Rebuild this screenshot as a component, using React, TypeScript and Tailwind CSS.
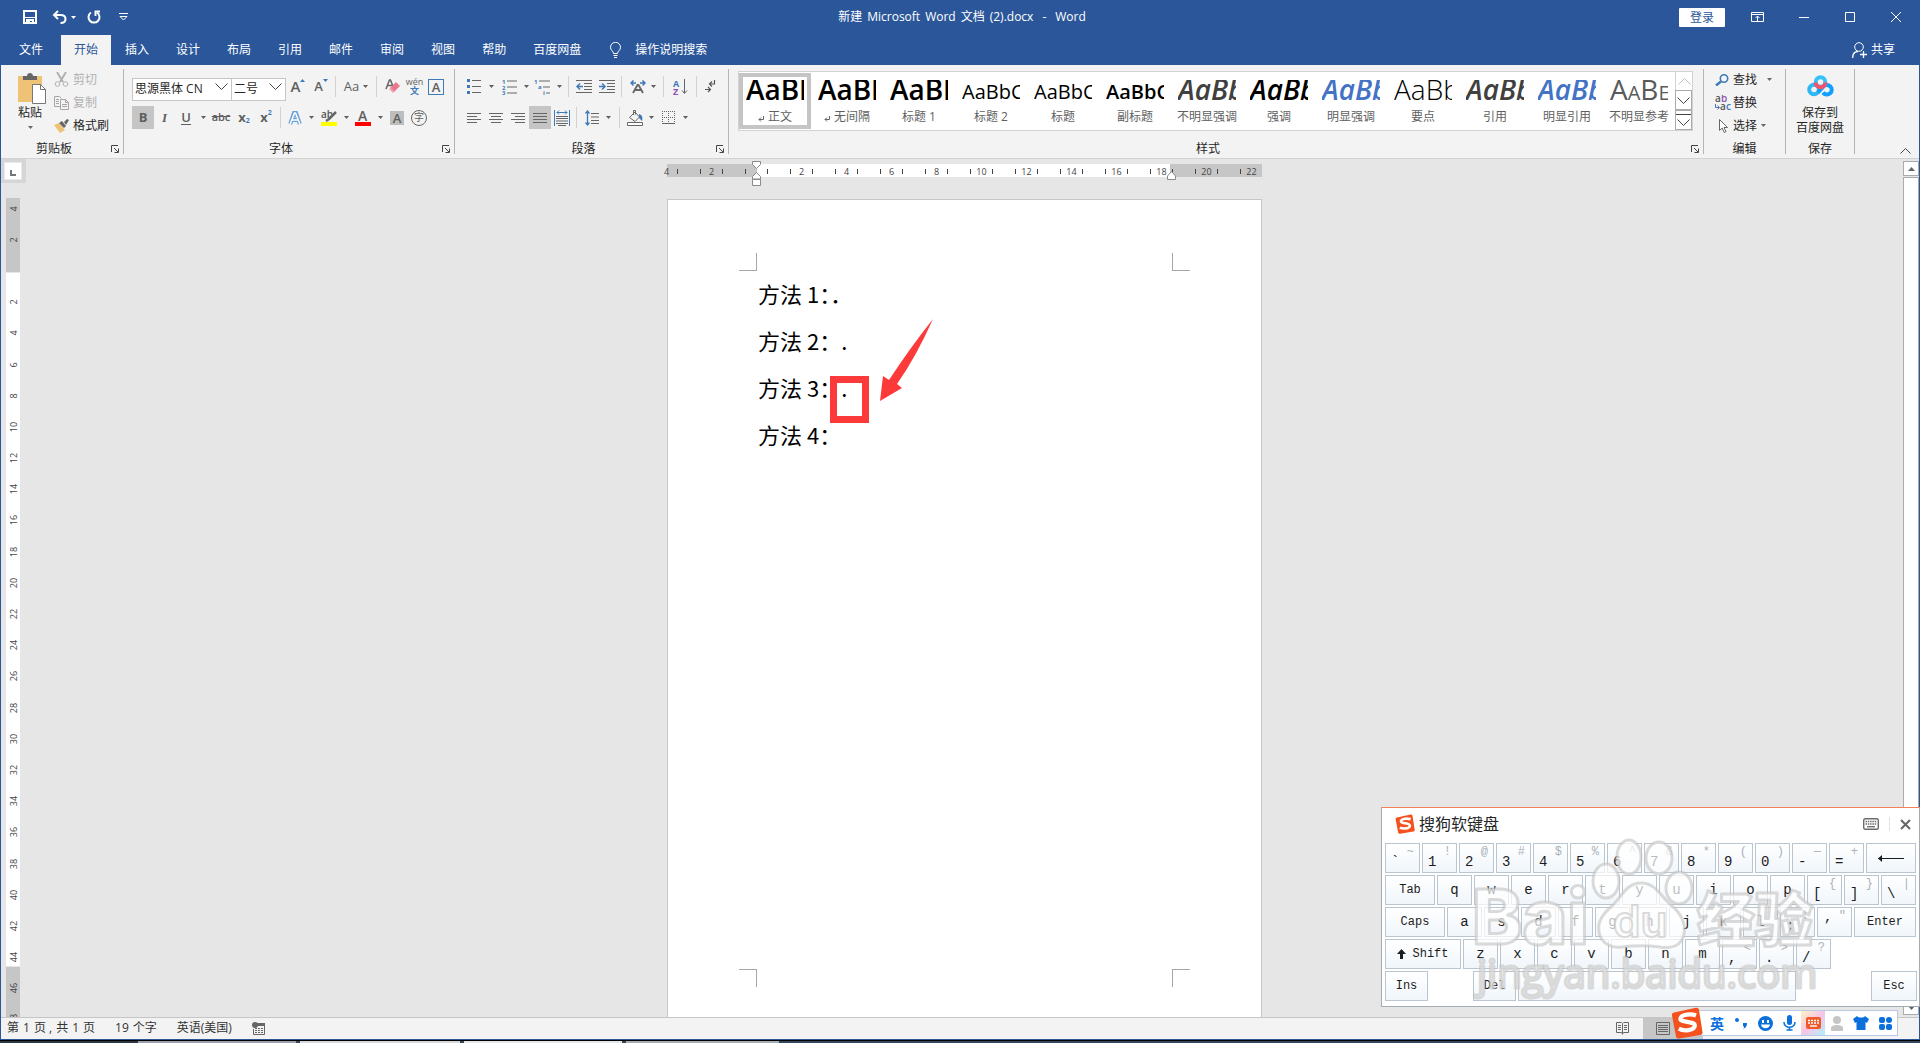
import type { ReactNode } from 'react';
import clsx from 'clsx';

const TABS = ['开始', '插入', '设计', '布局', '引用', '邮件', '审阅', '视图', '帮助', '百度网盘'];

const STYLES = [
  { label: '正文', mark: true, sample: 'AaBb', look: 'text-[28px] leading-[28px] font-semibold text-black' },
  { label: '无间隔', mark: true, sample: 'AaBb', look: 'text-[28px] leading-[28px] font-semibold text-black' },
  { label: '标题 1', sample: 'AaBb', look: 'text-[28px] leading-[28px] font-semibold text-black' },
  { label: '标题 2', sample: 'AaBbC', look: 'text-[20px] leading-[22px] text-black' },
  { label: '标题', sample: 'AaBbC', look: 'text-[20px] leading-[22px] text-black' },
  { label: '副标题', sample: 'AaBbC', look: 'text-[20px] leading-[22px] font-semibold text-black' },
  { label: '不明显强调', sample: 'AaBb', look: 'text-[28px] leading-[28px] font-semibold italic text-[#404040]' },
  { label: '强调', sample: 'AaBb', look: 'text-[28px] leading-[28px] font-semibold italic text-black' },
  { label: '明显强调', sample: 'AaBb', look: 'text-[28px] leading-[28px] font-semibold italic text-[#4472c4]' },
  { label: '要点', sample: 'AaBb', look: 'text-[28px] leading-[28px] font-light text-black' },
  { label: '引用', sample: 'AaBb', look: 'text-[28px] leading-[28px] font-semibold italic text-[#404040]' },
  { label: '明显引用', sample: 'AaBb', look: 'text-[28px] leading-[28px] font-semibold italic text-[#4472c4]' },
  { label: '不明显参考', sample: 'AaBe', look: 'text-[28px] leading-[28px] text-[#5a5a5a] [font-variant-caps:small-caps]' },
];

const H_RULER = ['4', '2', '', '2', '4', '6', '8', '10', '12', '14', '16', '18', '20', '22'];
const V_RULER = ['4', '2', '', ...Array.from({ length: 24 }, (_, i) => String(i * 2 + 2))];

type KeyDef = { k: string; s?: string };
const ROW_1: KeyDef[] = [
  { k: '`', s: '~' }, { k: '1', s: '!' }, { k: '2', s: '@' }, { k: '3', s: '#' }, { k: '4', s: '$' },
  { k: '5', s: '%' }, { k: '6', s: '^' }, { k: '7', s: '&' }, { k: '8', s: '*' }, { k: '9', s: '(' },
  { k: '0', s: ')' }, { k: '-', s: '—' }, { k: '=', s: '+' },
];
const ROW_2: KeyDef[] = [
  ...'qwertyuiop'.split('').map((k) => ({ k })),
  { k: '[', s: '{' }, { k: ']', s: '}' }, { k: '\\', s: '|' },
];
const ROW_3: KeyDef[] = [...'asdfghjkl'.split('').map((k) => ({ k })), { k: ';', s: ':' }, { k: '’', s: '"' }];
const ROW_4: KeyDef[] = [
  ...'zxcvbnm'.split('').map((k) => ({ k })),
  { k: ',', s: '<' }, { k: '.', s: '>' }, { k: '/', s: '?' },
];

/* ---------- small shared pieces ---------- */

function Svg({ w, h, children, className }: { w: number; h: number; children: ReactNode; className?: string }) {
  return (
    <svg width={w} height={h} viewBox={`0 0 ${w} ${h}`} fill="none" stroke="#666" className={clsx('shrink-0', className)} aria-hidden="true">
      {children}
    </svg>
  );
}

function Caret({ className }: { className?: string }) {
  return (
    <svg width="5" height="3" viewBox="0 0 5 3" fill="currentColor" className={clsx('shrink-0', className)} aria-hidden="true">
      <path d="M0 0h5L2.5 3z" />
    </svg>
  );
}

function Tool({ label, className, active, children }: { label: string; className: string; active?: boolean; children: ReactNode }) {
  return (
    <button
      type="button"
      aria-label={label}
      className={clsx('flex h-[23px] shrink-0 items-center justify-center text-[#5f5f5f]', active && 'bg-[#c5c5c5]', className)}
    >
      {children}
    </button>
  );
}

function Drop({ label, className }: { label: string; className: string }) {
  return (
    <Tool label={label} className={className}>
      <Caret />
    </Tool>
  );
}

function Sep() {
  return <div className="mx-[3px] h-[21px] w-px shrink-0 bg-[#d2d2d2]" />;
}

function Group({ title, launcher, className, children }: { title: string; launcher?: boolean; className: string; children: ReactNode }) {
  return (
    <>
      <section className={clsx('flex flex-col', className)}>
        <div className="h-[76px]">{children}</div>
        <div className="flex h-4 items-center">
          <h2 className="flex-1 text-center text-xs text-[#262626]">{title}</h2>
          {launcher && (
            <button type="button" aria-label={`${title}设置`} className="flex w-4 justify-center">
              <Svg w={8} h={8} className="stroke-[#444]">
                <path d="M.5 7V.5H7M3 3l4 4M7.500 3.500v4h-4" />
              </Svg>
            </button>
          )}
        </div>
      </section>
      <div className="mt-1 h-[85px] w-px shrink-0 bg-[#b5b5b5]" />
    </>
  );
}

function Lines({ rows }: { rows: [number, number][] }) {
  return (
    <Svg w={14} h={12}>
      {rows.map(([x, len], i) => (
        <path key={i} d={`M${x} ${i * 3 + 1.5}h${len}`} />
      ))}
    </Svg>
  );
}

function SogouMark({ size }: { size: number }) {
  return (
    <svg width={size} height={size} viewBox="0 0 32 32" className="shrink-0" aria-hidden="true">
      <path d="M3 5.500 25 .8a2.500 2.500 0 0 1 3 2L31.500 25a2.500 2.500 0 0 1-2 3L8 31.500a2.500 2.500 0 0 1-3-2L1 8.500a2.500 2.500 0 0 1 2-3z" fill="#f4511e" />
      <path d="M25 8.500c-4.500-2-14.500-1.500-15.500 2.900-1 4.600 14.500 2.300 14.300 7.300-.2 4.800-11 5.800-16 3" fill="none" stroke="#fff" strokeWidth="4.200" />
    </svg>
  );
}

/* ---------- title bar and tabs ---------- */

function TitleBar() {
  return (
    <header className="flex h-[35px] items-center pb-px text-white">
      <div className="flex h-full flex-1 items-center pl-[23px]">
        <button type="button" aria-label="保存">
          <Svg w={14} h={14} className="stroke-white">
            <path d="M1 1h12v12H1z" strokeWidth="2" />
            <path d="M2 7.500h10" />
            <path d="M3 9h8v5H9v-3H7v3H3z" fill="#fff" stroke="none" />
          </Svg>
        </button>
        <button type="button" aria-label="撤消" className="ml-[15px]">
          <Svg w={15} h={14} className="stroke-white">
            <path d="M6 1 2 5l4 4M2 5h6.500c3 0 5 1.500 5 4s-2 4-5 4" strokeWidth="2" />
          </Svg>
        </button>
        <Caret className="ml-1" />
        <button type="button" aria-label="重复" className="ml-[11px]">
          <Svg w={14} h={14} className="stroke-white">
            <path d="M4 2.500A5.500 5.500 0 1 0 10 2.500" strokeWidth="2" />
            <path d="M13 1.500H8.500V6" strokeWidth="2" />
          </Svg>
        </button>
        <button type="button" aria-label="自定义快速访问工具栏" className="ml-[18px]">
          <Svg w={9} h={8} className="stroke-white">
            <path d="M0 .5h9M1 3.500h7L4.500 7z" />
          </Svg>
        </button>
      </div>
      <h1 className="flex gap-[5px] text-xs">
        <span>新建</span>
        <span>Microsoft</span>
        <span>Word</span>
        <span>文档</span>
        <span>(2).docx</span>
        <span className="px-1">-</span>
        <span>Word</span>
      </h1>
      <div className="flex h-full flex-1 items-center justify-end pr-[19px]">
        <button type="button" className="h-[19px] w-[46px] rounded-[1px] bg-white text-xs leading-[19px] text-[#2b579a]">
          登录
        </button>
        <button type="button" aria-label="功能区显示选项" className="ml-[26px]">
          <Svg w={13} h={10} className="stroke-white">
            <path d="M.5.5h12v9H.5zM.5 2.500h12M6.500 9V4.500M4.500 6l2-2 2 2" />
          </Svg>
        </button>
        <button type="button" aria-label="最小化" className="ml-[35px]">
          <Svg w={10} h={10} className="stroke-white">
            <path d="M0 5.500h10" />
          </Svg>
        </button>
        <button type="button" aria-label="最大化" className="ml-9">
          <Svg w={10} h={10} className="stroke-white">
            <path d="M.5.5h9v9h-9z" />
          </Svg>
        </button>
        <button type="button" aria-label="关闭" className="ml-9">
          <Svg w={10} h={10} className="stroke-white">
            <path d="M0 0l10 10M10 0 0 10" />
          </Svg>
        </button>
      </div>
    </header>
  );
}

function TabBar() {
  return (
    <nav className="flex h-[30px] items-stretch text-xs text-white">
      <button type="button" className="ml-px w-[60px]">文件</button>
      <div className="flex gap-px">
        {TABS.map((tab, i) => (
          <button key={tab} type="button" className={clsx('px-[13px]', i === 0 && 'bg-[#f3f3f3] text-[#2b579a]')}>
            {tab}
          </button>
        ))}
      </div>
      <button type="button" className="ml-4 flex items-center gap-[14px]">
        <Svg w={11} h={16} className="stroke-white">
          <path d="M3.500 11.500C3.500 9 .5 8.500.5 5.300a5 5 0 0 1 10 0c0 3.200-3 3.700-3 6.200zM3.500 13.500h4M4 15.500h3" />
        </Svg>
        操作说明搜索
      </button>
      <button type="button" className="ml-auto mr-[25px] flex items-center gap-1">
        <Svg w={15} h={16} className="stroke-white">
          <circle cx="7" cy="5" r="4.300" />
          <path d="M.7 16c0-4 2-6.500 5.300-6.500M8 12.500h7M11.500 9v7" strokeWidth="1.300" />
        </Svg>
        共享
      </button>
    </nav>
  );
}

/* ---------- ribbon ---------- */

function ClipboardGroup() {
  return (
    <Group title="剪贴板" launcher className="w-[122px]">
      <div className="flex pl-4">
        <button type="button" className="flex w-[30px] flex-col items-center pt-[7px] text-xs text-[#262626]">
          <Svg w={30} h={32} className="self-start stroke-none">
            <path d="M1 4h24v26H1z" fill="#eec376" />
            <path d="M6 8V4h4c0-4 6-4 6 0h4v4z" fill="#666" />
            <path d="M15.500 12.500h8l5 5v14h-13z" fill="#fff" stroke="#777" />
            <path d="M23.500 12.500v5h5" stroke="#777" />
          </Svg>
          <span className="mr-1 leading-[18px]">粘贴</span>
          <Caret className="mr-1 mt-1 text-[#666]" />
        </button>
        <div className="ml-[7px] flex flex-col pt-[3px] text-xs">
          <button type="button" disabled className="flex h-[23px] items-center gap-1 text-[#b1b1b1]">
            <Svg w={15} h={15} className="stroke-[#b1b1b1]">
              <path d="M3 0l6 10M12 0 6 10" strokeWidth="2" />
              <circle cx="3.500" cy="12" r="2.300" />
              <circle cx="11.500" cy="12" r="2.300" />
            </Svg>
            剪切
          </button>
          <button type="button" disabled className="flex h-[23px] items-center gap-1 text-[#b1b1b1]">
            <Svg w={15} h={14} className="stroke-[#a9a4a9]">
              <path d="M6 10.500H.5V.5h5l2 2M2 3.500h3M2 5.500h3M2 7.500h3" />
              <path d="M6.500 3.500h5l3 3v7h-8zM11.500 3.500v3h3M8 8.500h5M8 10.500h5" fill="#f3f3f3" />
            </Svg>
            复制
          </button>
          <button type="button" className="flex h-[23px] items-center gap-1 text-[#262626]">
            <Svg w={15} h={14} className="stroke-none">
              <path d="M0 6l5-2 6 7-5 3z" fill="#eec376" />
              <path d="M5 4l3-2 4 5-2 2zM10 3l3-3 2 1-3 5z" fill="#666" />
            </Svg>
            格式刷
          </button>
        </div>
      </div>
    </Group>
  );
}

function Combo({ label, value, className }: { label: string; value: string; className: string }) {
  return (
    <div className={clsx('relative h-[23px]', className)}>
      <select
        aria-label={label}
        defaultValue={value}
        className="h-full w-full appearance-none border border-[#c6c6c6] bg-white pb-px pl-[2px] text-xs text-[#262626]"
      >
        <option>{value}</option>
      </select>
      <Svg w={13} h={8} className="pointer-events-none absolute right-1 top-2 stroke-[#444]">
        <path d="M.5.5l6 6 6-6" />
      </Svg>
    </div>
  );
}

function FontGroup() {
  return (
    <Group title="字体" launcher className="w-[330px]">
      <div className="flex items-center pl-2 pt-[10px]">
        <Combo label="字体" value="思源黑体 CN" className="w-[100px]" />
        <Combo label="字号" value="二号" className="-ml-px w-[55px]" />
        <Tool label="增大字号" className="w-6">
          <span className="text-[15px] font-semibold">A</span>
          <Svg w={5} h={3} className="mb-3 stroke-none"><path d="M0 3h5L2.500 0z" fill="#3f7ab8" /></Svg>
        </Tool>
        <Tool label="减小字号" className="w-[22px]">
          <span className="text-[13px] font-semibold">A</span>
          <Svg w={5} h={3} className="mb-3 stroke-none"><path d="M0 0h5L2.500 3z" fill="#3f7ab8" /></Svg>
        </Tool>
        <Sep />
        <Tool label="更改大小写" className="w-[34px] gap-1">
          <span className="text-[13px]">Aa</span>
          <Caret />
        </Tool>
        <Sep />
        <Tool label="清除所有格式" className="w-6">
          <Svg w={15} h={15}>
            <path d="M1 10 4.500 1h1L9 10M2.500 6.500h5" strokeWidth="1.500" />
            <path d="M5 9l6-6 4 4-6 6z" fill="#e8798c" stroke="none" />
            <path d="M4 10l4 4 1.500-1.500-4-4z" fill="#f0a5b2" stroke="none" />
          </Svg>
        </Tool>
        <Tool label="拼音指南" className="w-[21px] flex-col">
          <span className="text-[9px] leading-[8px]">wén</span>
          <span className="text-[9px] font-bold leading-[9px] text-[#3f7ab8]">文</span>
        </Tool>
        <Tool label="字符边框" className="w-[22px]">
          <span className="flex h-4 w-4 items-center justify-center border border-[#3f7ab8] text-[13px] font-semibold leading-[14px]">A</span>
        </Tool>
      </div>
      <div className="flex items-center pl-2 pt-2">
        <Tool label="加粗" active className="w-[22px] text-[13px] font-bold">B</Tool>
        <Tool label="倾斜" className="w-[21px] font-['Liberation_Serif',serif] text-[13px] font-bold italic">I</Tool>
        <Tool label="下划线" className="w-[22px]">
          <span className="border-b border-[#5f5f5f] text-[13px] font-semibold leading-[13px]">U</span>
        </Tool>
        <Drop label="下划线选项" className="w-3" />
        <Tool label="删除线" className="w-6 text-[11px] font-semibold line-through">abc</Tool>
        <Tool label="下标" className="w-[22px] text-[13px] font-bold">
          x<span className="mt-2 text-[7px] text-[#3f7ab8]">2</span>
        </Tool>
        <Tool label="上标" className="w-[22px] text-[13px] font-bold">
          x<span className="mb-2 text-[7px] text-[#3f7ab8]">2</span>
        </Tool>
        <Sep />
        <Tool label="文本效果" className="w-[22px]">
          <svg width="16" height="16" viewBox="0 0 16 16" aria-hidden="true">
            <path d="M3.200 14 7 3h2l3.800 11M4.800 10h6.400" fill="none" stroke="#6ba1d6" strokeWidth="4" />
            <path d="M3.200 14 7.500 3h1L12.800 14M4.800 10h6.400" fill="none" stroke="#fff" strokeWidth="1.500" />
          </svg>
        </Tool>
        <Drop label="文本效果选项" className="w-[10px]" />
        <Tool label="突出显示" className="w-[26px]">
          <Svg w={16} h={16}>
            <text x="0" y="8" fontSize="10" fontWeight="600" fill="#555" stroke="none">ab</text>
            <path d="M15 2 8 9l-3 2" strokeWidth="2.500" />
            <path d="M0 12h16v4H0z" fill="#ff0" stroke="none" />
          </Svg>
        </Tool>
        <Drop label="突出显示颜色" className="w-2" />
        <Tool label="字体颜色" className="w-[26px]">
          <Svg w={16} h={16}>
            <text x="3" y="11" fontSize="14" fontWeight="600" fill="#5f5f5f" stroke="none">A</text>
            <path d="M0 12h16v4H0z" fill="#f00" stroke="none" />
          </Svg>
        </Tool>
        <Drop label="字体颜色选项" className="w-2" />
        <Tool label="字符底纹" className="w-[26px]">
          <span className="h-[14px] w-[14px] bg-[#bdbdbd] text-[13px] font-semibold leading-[14px]">A</span>
        </Tool>
        <Tool label="带圈字符" className="w-[18px]">
          <span className="h-4 w-4 shrink-0 rounded-full border border-[#666] text-[10px] leading-[13px]">字</span>
        </Tool>
      </div>
    </Group>
  );
}

function ParagraphGroup() {
  return (
    <Group title="段落" launcher className="w-[273px]">
      <div className="flex items-center pl-2 pt-[10px]">
        <Tool label="项目符号" className="w-[22px]">
          <Svg w={14} h={15}>
            <path d="M5 1.500h9M5 7.500h9M5 13.500h9" />
            <path d="M0 0h3v3H0zM0 6h3v3H0zM0 12h3v3H0z" fill="#3f7ab8" stroke="none" />
          </Svg>
        </Tool>
        <Drop label="项目符号库" className="w-3" />
        <Tool label="编号" className="w-6">
          <Svg w={15} h={16}>
            <path d="M5 2h10M5 8h10M5 14h10" />
            <g fontSize="6" fontWeight="700" fill="#3f7ab8" stroke="none">
              <text x="0" y="5">1</text>
              <text x="0" y="11">2</text>
              <text x="0" y="16">3</text>
            </g>
          </Svg>
        </Tool>
        <Drop label="编号库" className="w-[10px]" />
        <Tool label="多级列表" className="w-[22px]">
          <Svg w={16} h={16}>
            <path d="M5 2h11M9 8h7M12 14h4" />
            <g fontSize="6" fontWeight="700" fill="#3f7ab8" stroke="none">
              <text x="0" y="5">1</text>
              <text x="4" y="10">a</text>
              <text x="9" y="16">i</text>
            </g>
          </Svg>
        </Tool>
        <Drop label="多级列表库" className="w-3" />
        <Sep />
        <Tool label="减少缩进量" className="w-6">
          <Svg w={16} h={13}>
            <path d="M0 .5h16M8 3.500h8M8 6.500h8M8 9.500h8M0 12.500h16" />
            <path d="M7 6.500H1M4 3.500l-3 3 3 3" stroke="#3f7ab8" strokeWidth="1.500" />
          </Svg>
        </Tool>
        <Tool label="增加缩进量" className="w-[22px]">
          <Svg w={16} h={13}>
            <path d="M0 .5h16M8 3.500h8M8 6.500h8M8 9.500h8M0 12.500h16" />
            <path d="M0 6.500h6M3 3.500l3 3-3 3" stroke="#3f7ab8" strokeWidth="1.500" />
          </Svg>
        </Tool>
        <Sep />
        <Tool label="中文版式" className="w-[25px]">
          <Svg w={16} h={14}>
            <path d="M3 13 7.500 5h1L13 13M4.500 10h7" strokeWidth="1.800" />
            <path d="M6 3H1M3.500.5 1 3l2.500 2.500M10 3h5M12.500.5 15 3l-2.500 2.500" stroke="#3f7ab8" strokeWidth="1.500" />
          </Svg>
        </Tool>
        <Drop label="中文版式选项" className="mr-1 w-[6px]" />
        <Sep />
        <Tool label="排序" className="w-[26px]">
          <Svg w={15} h={16}>
            <text x="0" y="8" fontSize="9" fontWeight="700" fill="#3f7ab8" stroke="none">A</text>
            <text x="0" y="16" fontSize="9" fontWeight="700" fill="#8b52ae" stroke="none">Z</text>
            <path d="M11.500 0v14M9 11.500l2.500 3 2.500-3" />
          </Svg>
        </Tool>
        <Sep />
        <Tool label="显示编辑标记" className="w-[22px]">
          <Svg w={12} h={13} className="stroke-[#555]">
            <path d="M9.500 0v4H5M7 1.500 4.500 4 7 6.500M0 9.500h5M3 7l2.500 2.500L3 12" strokeWidth="1.200" />
          </Svg>
        </Tool>
      </div>
      <div className="flex items-center pl-2 pt-2">
        <Tool label="左对齐" className="w-[22px]"><Lines rows={[[0, 14], [0, 10], [0, 14], [0, 10]]} /></Tool>
        <Tool label="居中" className="w-[22px]"><Lines rows={[[0, 14], [2, 10], [0, 14], [2, 10]]} /></Tool>
        <Tool label="右对齐" className="w-[22px]"><Lines rows={[[0, 14], [4, 10], [0, 14], [4, 10]]} /></Tool>
        <Tool label="两端对齐" active className="w-[22px]"><Lines rows={[[0, 14], [0, 14], [0, 14], [0, 14]]} /></Tool>
        <Tool label="分散对齐" className="w-[22px]">
          <Svg w={16} h={16}>
            <path d="M.5 0v16M15.500 0v16M3 2.500h10M5 .5l-2 2 2 2M11 .5l2 2-2 2" stroke="#3f7ab8" />
            <path d="M2 6.500h12M2 8.500h12M2 11h12M2 13.500h12M4 15.500h8" />
          </Svg>
        </Tool>
        <Sep />
        <Tool label="行和段落间距" className="w-6">
          <Svg w={14} h={16}>
            <path d="M6 3.500h8M6 7h8M6 10.500h8M6 13.500h8" />
            <path d="M2.500 1v14M.5 3.500l2-2.500 2 2.500M.5 12.500l2 2.500 2-2.500" stroke="#3f7ab8" strokeWidth="1.300" />
          </Svg>
        </Tool>
        <Drop label="间距选项" className="mr-1 w-2" />
        <Sep />
        <Tool label="底纹" className="w-6">
          <Svg w={16} h={16}>
            <path d="M2.500 7.500 8 2l4.500 5L8 11.500zM6.500 5V.5h2v4" />
            <path d="M12 4c3 1 4 3 3 7l-3-3z" fill="#3f7ab8" stroke="none" />
            <path d="M.5 12.500h15v3H.5z" fill="#fff" />
          </Svg>
        </Tool>
        <Drop label="底纹颜色" className="w-2" />
        <Tool label="边框" className="w-[26px]">
          <Svg w={13} h={13}>
            <path d="M.5 0v12M12.500 0v12M6.500 0v12M0 .5h13M0 6.500h13" strokeDasharray="1 1" />
            <path d="M0 12.500h13" />
          </Svg>
        </Tool>
        <Drop label="边框选项" className="w-2" />
      </div>
    </Group>
  );
}

function StylesGroup() {
  return (
    <Group title="样式" launcher className="min-w-0 flex-1">
      <div className="pl-[9px] pr-[10px] pt-[6px]">
        <div className="flex h-[60px] border border-[#d2d2d2] bg-white">
          <div className="flex min-w-0 flex-1 overflow-hidden">
            {STYLES.map((style, i) => (
              <button
                key={style.label}
                type="button"
                className={clsx(
                  'my-px flex w-[72px] shrink-0 flex-col items-center border-4',
                  i === 0 ? 'border-[#c5c5c5]' : 'border-transparent',
                )}
              >
                <span className="mt-[3px] flex h-[23px] w-[58px] items-end overflow-hidden">
                  <span className={clsx("font-['Open_Sans','Noto_Sans',sans-serif]", style.look)}>{style.sample}</span>
                </span>
                <span className="mt-[5px] flex items-center gap-1 whitespace-nowrap text-xs leading-[17px] text-[#5f5f5f]">
                  {style.mark && (
                    <Svg w={6} h={6} className="mt-1">
                      <path d="M5.500 0v3.500H1M3 1.500l-2 2 2 2" />
                    </Svg>
                  )}
                  {style.label}
                </span>
              </button>
            ))}
          </div>
          <div className="flex w-[17px] flex-col">
            <button type="button" aria-label="上一行" className="flex flex-1 items-center justify-center border-l border-[#d2d2d2]">
              <Svg w={13} h={7} className="stroke-[#c0c0c0]"><path d="M.5 6.500l6-6 6 6" /></Svg>
            </button>
            <button type="button" aria-label="下一行" className="flex flex-1 items-center justify-center border border-[#ababab]">
              <Svg w={13} h={7} className="stroke-[#444]"><path d="M.5.5l6 6 6-6" /></Svg>
            </button>
            <button type="button" aria-label="其他样式" className="flex flex-1 items-center justify-center border border-[#ababab]">
              <Svg w={15} h={12} className="stroke-[#444]"><path d="M0 .5h15M1.500 5.500l6 6 6-6" /></Svg>
            </button>
          </div>
        </div>
      </div>
    </Group>
  );
}

function EditGroup() {
  return (
    <Group title="编辑" className="w-[81px]">
      <div className="flex flex-col pl-[11px] pt-[3px] text-xs text-[#262626]">
        <button type="button" className="flex h-[23px] items-center">
          <Svg w={14} h={12} className="mr-1">
            <circle cx="9" cy="4.500" r="3.700" stroke="#3f7ab8" strokeWidth="1.600" />
            <path d="M6 7.500 1 11.500" stroke="#3f7ab8" strokeWidth="2.400" />
          </Svg>
          查找
          <Caret className="ml-[10px] text-[#666]" />
        </button>
        <button type="button" className="flex h-[23px] items-center gap-[2px]">
          <Svg w={16} h={15} className="stroke-none">
            <text x="0" y="7" fontSize="10" fontWeight="600" fill="#555">a</text>
            <text x="6" y="7" fontSize="10" fontWeight="600" fill="#8b52ae">b</text>
            <text x="5" y="15" fontSize="10" fontWeight="600" fill="#555">a</text>
            <text x="11" y="15" fontSize="10" fontWeight="600" fill="#3f7ab8">c</text>
            <path d="M.5 9v3.500H4M2.500 10.500l2 2-2 2" stroke="#3f7ab8" fill="none" />
          </Svg>
          替换
        </button>
        <button type="button" className="flex h-[23px] items-center pl-1">
          <Svg w={9} h={14} className="mr-[5px]">
            <path d="M.5.5v11l2.700-2.500 2 4.500 1.800-.8-2-4.200h3.500z" fill="#fff" />
          </Svg>
          选择
          <Caret className="ml-1 text-[#666]" />
        </button>
      </div>
    </Group>
  );
}

function CloudGroup() {
  return (
    <Group title="保存" className="w-[68px]">
      <button type="button" className="flex w-full flex-col items-center pt-[10px] text-xs leading-[15px] text-[#262626]">
        <svg width="27" height="22" viewBox="0 0 27 22" fill="none" strokeWidth="4" className="mb-2" aria-hidden="true">
          <circle cx="7" cy="14.500" r="4.800" stroke="#2fb8f5" />
          <path d="M11 17.500 16 12a4.800 4.800 0 1 1 0 5.500" stroke="#11a0ff" />
          <circle cx="13.500" cy="7" r="4.800" stroke="#35c2f8" />
          <path d="M8.700 7.500a4.800 4.800 0 0 0 9.600 0" stroke="#f4526a" />
        </svg>
        保存到
        <br />
        百度网盘
      </button>
    </Group>
  );
}

/* ---------- document area ---------- */

function HorizontalRuler() {
  return (
    <div className="relative mt-[5px] flex h-[13px] w-[595px] shrink-0 bg-[#c6c6c6]">
      <div className="ml-[90px] h-full w-[413px] bg-white" />
      <div className="absolute inset-y-0 -left-[23px] flex pt-px text-[9px] leading-[13px] text-[#444]">
        {H_RULER.map((n, i) => (
          <div key={i} className="flex w-[45px] items-center justify-between px-[11px]">
            <span className={clsx('h-[5px] w-px', i > 0 && 'bg-[#444]')} />
            <span>{n}</span>
            <span className={clsx('h-[5px] w-px', i < H_RULER.length - 1 && 'bg-[#444]')} />
          </div>
        ))}
      </div>
      <Svg w={9} h={25} className="absolute -top-[3px] left-[85px] stroke-[#8a8a8a]">
        <path d="M.5.5h8v3l-4 4-4-4zM.5 18v-2.500l4-4 4 4V18zM.5 18.500h8v6h-8z" fill="#fff" />
      </Svg>
      <Svg w={9} h={9} className="absolute left-[500px] top-[7px] stroke-[#8a8a8a]">
        <path d="M.5 8.500V5l4-4.500 4 4.500v3.500z" fill="#fff" />
      </Svg>
    </div>
  );
}

function VerticalRuler() {
  return (
    <div className="flex w-[25px] shrink-0 flex-col">
      <div className="h-6 bg-[#d6d6d6] p-[3px] pr-1">
        <div className="flex h-full items-center justify-center border border-[#e9e9e9] bg-white">
          <span className="mt-1 h-[6px] w-[6px] border-b-2 border-l-2 border-[#777]" />
        </div>
      </div>
      <div className="relative ml-[5px] mt-[15px] flex min-h-0 w-[14px] flex-1 flex-col gap-px overflow-hidden">
        <div className="h-[74px] shrink-0 bg-[#c6c6c6]" />
        <div className="h-[693px] shrink-0 bg-white" />
        <div className="flex-1 bg-[#c6c6c6]" />
        <div className="absolute inset-x-0 -top-[5px] flex h-[842px] flex-col pl-[2px] text-[9px] leading-[14px] text-[#444]">
          {V_RULER.map((n, i) => (
            <div key={i} className="flex flex-1 items-center justify-center">
              <span className="-rotate-90">{n}</span>
            </div>
          ))}
        </div>
      </div>
    </div>
  );
}

function Page() {
  return (
    <article className="mt-[22px] flex w-[595px] flex-1 flex-col border border-b-0 border-[#c6c6c6] bg-white">
      <div className="mt-[53px] flex justify-between px-[71px]">
        <span className="h-[18px] w-[18px] border-b border-r border-[#a6a6a6]" />
        <span className="h-[18px] w-[18px] border-b border-l border-[#a6a6a6]" />
      </div>
      <div className="relative -mt-px px-[90px] font-['Noto_Sans_CJK_SC',sans-serif] text-[22px] leading-[47px] text-black">
        <p>方法 1：．</p>
        <p>方法 2：.</p>
        <p>方法 3：.</p>
        <p>方法 4：</p>
        <div className="absolute left-[162px] top-[106px] h-[47px] w-[39px] border-[7px] border-[#fc3a3a]" />
        <svg width="54" height="84" viewBox="0 0 54 84" className="absolute left-[212px] top-[49px]" aria-hidden="true">
          <path d="M53 0Q36 38 17 65l5 4L0 82 3 57l6 4Q30 29 53 0z" fill="#fc3a3a" />
        </svg>
      </div>
      <div className="mb-[30px] mt-auto flex justify-between px-[71px]">
        <span className="h-[18px] w-[18px] border-r border-t border-[#a6a6a6]" />
        <span className="h-[18px] w-[18px] border-l border-t border-[#a6a6a6]" />
      </div>
    </article>
  );
}

function ScrollBar() {
  return (
    <div className="flex w-4 shrink-0 flex-col gap-px pt-0.5 text-[#666]">
      <button type="button" aria-label="向上滚动" className="flex h-[15px] items-center justify-center border border-[#ababab] bg-white">
        <svg width="7" height="4" viewBox="0 0 7 4" fill="currentColor" aria-hidden="true"><path d="M0 4h7L3.500 0z" /></svg>
      </button>
      <div className="flex-1 border border-[#ababab] bg-white" />
      <button type="button" aria-label="向下滚动" className="mb-0.5 flex h-[15px] items-center justify-center border border-[#ababab] bg-white">
        <svg width="7" height="4" viewBox="0 0 7 4" fill="currentColor" aria-hidden="true"><path d="M0 0h7L3.500 4z" /></svg>
      </button>
    </div>
  );
}

/* ---------- on-screen keyboard ---------- */

const KEY = 'h-[30px] shrink-0 border border-[#b9c6d1] bg-gradient-to-b from-white to-[#f1f6fb] text-[#1c1c1c]';

function Keys({ keys }: { keys: KeyDef[] }) {
  return (
    <>
      {keys.map(({ k, s }) => (
        <button key={k} type="button" className={clsx(KEY, 'w-[35px] text-[14px] leading-[14px]', s ? 'flex justify-between px-[5px]' : '')}>
          <span className={s ? 'self-end pb-[3px]' : ''}>{k}</span>
          {s && <span className="self-start pt-px text-[12px] text-[#a9b2ba]">{s}</span>}
        </button>
      ))}
    </>
  );
}

function WideKey({ children, className }: { children?: ReactNode; className: string }) {
  return (
    <button type="button" className={clsx(KEY, 'flex items-center justify-center gap-[6px] text-xs', className)}>
      {children}
    </button>
  );
}

function Watermark() {
  return (
    <svg
      width="360"
      height="170"
      viewBox="0 0 360 170"
      className="pointer-events-none absolute bottom-[6px] right-[94px]"
      fill="#fff"
      fillOpacity="0.7"
      stroke="#c2c2c2"
      strokeOpacity="0.6"
      strokeWidth="3"
      strokeLinejoin="round"
      aria-hidden="true"
    >
      <ellipse cx="141" cy="51" rx="13" ry="17" />
      <ellipse cx="164" cy="27" rx="12" ry="17" />
      <ellipse cx="194" cy="28" rx="13" ry="16" />
      <ellipse cx="214" cy="58" rx="13" ry="16" />
      <path d="M176 53c15 0 20 14 30 22 10 8 15 19 13 29-2 12-13 15-24 13-14-2-24-2-38 0-12 1-21-4-23-15-2-11 5-19 13-26 9-8 14-23 29-23z" />
      <g fontFamily="Inter, sans-serif" fontWeight="800">
        <text x="7" y="114" fontSize="76">Bai</text>
        <text x="148" y="107" fontSize="44" fontWeight="600" strokeWidth="2">du</text>
        <text x="232" y="111" fontSize="58" fontFamily="'Noto Sans CJK SC', sans-serif" fontWeight="900">经验</text>
      </g>
      <text x="12" y="158" fontSize="40" fontFamily="'Open Sans', sans-serif">jingyan.baidu.com</text>
    </svg>
  );
}

function SoftKeyboard() {
  return (
    <aside className="absolute bottom-9 right-0 w-[539px] border border-t-[#f4805a] border-[#a3abb3] bg-white pb-[5px]">
      <div className="flex h-[35px] items-center pb-[3px] pl-[13px] pr-2">
        <SogouMark size={20} />
        <h2 className="ml-1 text-[16px] text-[#262626]">搜狗软键盘</h2>
        <button type="button" aria-label="切换键盘" className="ml-auto">
          <Svg w={16} h={12} className="stroke-none">
            <rect x=".7" y=".7" width="14.600" height="10.600" rx="1.500" fill="#fff" stroke="#6b6b6b" strokeWidth="1.400" />
            <path d="M2.500 3.500h11M2.500 6h11" stroke="#6b6b6b" strokeWidth="1.300" strokeDasharray="1.500 .8" />
            <path d="M4 8.700h8" stroke="#6b6b6b" strokeWidth="1.300" />
          </Svg>
        </button>
        <span className="mx-[10px] h-[14px] w-px bg-[#dde0e4]" />
        <button type="button" aria-label="关闭键盘">
          <Svg w={11} h={11}><path d="M1 1l9 9M10 1l-9 9" strokeWidth="2" /></Svg>
        </button>
      </div>
      <div className="flex flex-col gap-[2px] pl-[3px] pr-[2px] font-['Liberation_Mono',monospace]">
        <div className="flex gap-[2px]">
          <Keys keys={ROW_1} />
          <WideKey className="w-[50px]">
            <Svg w={26} h={8} className="stroke-[#1c1c1c]">
              <path d="M0 4.500h26" />
              <path d="M0 4.500 4 1v7z" fill="#1c1c1c" stroke="none" />
            </Svg>
          </WideKey>
        </div>
        <div className="flex gap-[2px]">
          <WideKey className="w-[50px]">Tab</WideKey>
          <Keys keys={ROW_2} />
        </div>
        <div className="flex gap-[2px]">
          <WideKey className="w-[60px]">Caps</WideKey>
          <Keys keys={ROW_3} />
          <WideKey className="w-[62px]">Enter</WideKey>
        </div>
        <div className="flex gap-[2px]">
          <WideKey className="w-[76px]">
            <Svg w={9} h={10} className="stroke-none"><path d="M4.500 0 9 5H6v5H3V5H0z" fill="#1c1c1c" /></Svg>
            Shift
          </WideKey>
          <Keys keys={ROW_4} />
        </div>
        <div className="flex gap-[2px]">
          <WideKey className="mr-[43px] w-[43px]">Ins</WideKey>
          <WideKey className="w-[43px]">Del</WideKey>
          <WideKey className="w-[278px]" />
          <WideKey className="ml-auto w-[46px]">Esc</WideKey>
        </div>
      </div>
      <Watermark />
    </aside>
  );
}

/* ---------- input method bar ---------- */

function ImeBar() {
  const cell = 'flex h-full w-6 items-center justify-center';
  return (
    <div className="absolute bottom-1 right-[22px] flex items-center">
      <div className="z-10 -mr-2"><SogouMark size={32} /></div>
      <div className="flex h-[26px] items-center border border-[#b9c9e6] bg-white pl-[9px] text-[#0b70dc]">
        <button type="button" className={clsx(cell, 'text-[14px] font-bold')}>英</button>
        <button type="button" aria-label="标点" className={cell}>
          <Svg w={12} h={12} className="stroke-none">
            <circle cx="2" cy="3" r="2" fill="#0b70dc" />
            <path d="M8 6h4c0 3-1 5-4 6 1.500-1.500 1.500-2.500 0-3z" fill="#0b70dc" />
          </Svg>
        </button>
        <button type="button" aria-label="表情" className={cell}>
          <Svg w={15} h={15} className="stroke-none">
            <circle cx="7.500" cy="7.500" r="7.500" fill="#0b70dc" />
            <path d="M4 4h2v3H4zM9 4h2v3H9zM3 8.500h9c-.5 5-8.500 5-9 0z" fill="#fff" />
          </Svg>
        </button>
        <button type="button" aria-label="语音" className={cell}>
          <Svg w={13} h={16}>
            <rect x="4" y="0" width="5" height="10" rx="2.500" fill="#0b70dc" stroke="none" />
            <path d="M1 7c0 7 11 7 11 0M6.500 12v3M3.500 15h6" stroke="#0b70dc" strokeWidth="1.600" />
          </Svg>
        </button>
        <button type="button" aria-label="软键盘" className={clsx(cell, 'bg-gradient-to-br from-[#fdf3c0] via-[#f6c3e6] to-[#a9f0fa]')}>
          <Svg w={15} h={12} className="stroke-none">
            <rect width="15" height="12" rx="2" fill="#f05a28" />
            <path d="M2 3.500h11M2 6h11" stroke="#fff" strokeWidth="1.400" strokeDasharray="2 1" />
            <path d="M4 9h7" stroke="#fff" strokeWidth="1.400" />
          </Svg>
        </button>
        <button type="button" aria-label="账户" className={cell}>
          <Svg w={12} h={15} className="stroke-none">
            <circle cx="6" cy="4" r="4" fill="#c6c6c6" />
            <path d="M0 15V12c0-4 12-4 12 0v3z" fill="#c6c6c6" />
          </Svg>
        </button>
        <button type="button" aria-label="皮肤" className={cell}>
          <Svg w={16} h={14} className="stroke-none">
            <path d="M4 0c1 2 7 2 8 0l4 3-2 4-1.500-1v8h-9V6L2 7 0 3z" fill="#0b70dc" />
          </Svg>
        </button>
        <button type="button" aria-label="工具箱" className={cell}>
          <Svg w={13} h={13} className="stroke-none">
            <g fill="#0b70dc">
              <rect width="6" height="6" rx="2" />
              <rect x="7" width="6" height="6" rx="3" />
              <rect y="7" width="6" height="6" rx="2" />
              <rect x="7" y="7" width="6" height="6" rx="2" />
            </g>
          </Svg>
        </button>
      </div>
    </div>
  );
}

function StatusBar() {
  return (
    <footer className="flex h-[22px] shrink-0 items-center border-t border-[#c6c6c6] bg-[#f3f3f3] pb-px pl-[6px] text-xs text-[#333]">
      <span className="flex gap-1">
        <span>第</span>
        <span>1</span>
        <span>页 ,</span>
        <span>共</span>
        <span>1</span>
        <span>页</span>
      </span>
      <span className="ml-5 flex gap-1">
        <span>19</span>
        <span>个字</span>
      </span>
      <span className="ml-5">英语(美国)</span>
      <Svg w={13} h={13} className="ml-5">
        <path d="M5 2.500h7.500v10h-11V7" />
        <path d="M5 1h8v3H5z" fill="#666" stroke="none" />
        <circle cx="3" cy="3" r="3" fill="#666" stroke="none" />
        <path d="M3 6.500h8M3 8.500h8M3 10.500h8" strokeDasharray="2 1" />
      </Svg>
      <button type="button" aria-label="阅读视图" className="ml-auto">
        <Svg w={13} h={13}>
          <path d="M.5.500h5l1 1 1-1h5v10h-5l-1 1.500-1-1.500h-5zM6.500 1.500v11M2 3.500h3M2 5.500h3M2 7.500h3M8 3.500h3M8 5.500h3M8 7.500h3" />
        </Svg>
      </button>
      <button type="button" aria-label="页面视图" className="ml-[14px] mr-[216px] flex h-[21px] w-[60px] items-center bg-[#c6c6c6] pl-[13px]">
        <Svg w={14} h={13}>
          <path d="M.5.5h13v12H.5zM2 3.500h10M2 5.500h10M2 7.500h10M2 9.500h10" />
        </Svg>
      </button>
    </footer>
  );
}

export default function App() {
  return (
    <div className="relative flex h-screen flex-col overflow-hidden bg-[#2b579a] font-['Open_Sans','Noto_Sans_CJK_SC',sans-serif]">
      <TitleBar />
      <TabBar />
      <div className="mx-px flex h-[94px] shrink-0 border-b border-[#d2d2d2] bg-[#f3f3f3]">
        <ClipboardGroup />
        <FontGroup />
        <ParagraphGroup />
        <StylesGroup />
        <EditGroup />
        <CloudGroup />
        <div className="flex w-16 items-end justify-end pb-1 pr-2">
          <button type="button" aria-label="折叠功能区">
            <Svg w={11} h={6} className="stroke-[#444]"><path d="M.5 5.500l5-5 5 5" /></Svg>
          </button>
        </div>
      </div>
      <main className="mx-px flex min-h-0 flex-1 overflow-hidden bg-[#e6e6e6]">
        <VerticalRuler />
        <div className="flex min-w-0 flex-1 flex-col items-center">
          <HorizontalRuler />
          <Page />
        </div>
        <ScrollBar />
      </main>
      <div className="mx-px shrink-0"><StatusBar /></div>
      <div className="mt-px flex h-[3px] shrink-0 border-t border-black bg-[#33475a]">
        <span className="w-[138px] bg-[#2a3644]" />
        <span className="w-[158px] bg-[#9aa3ad]" />
        <span className="ml-1 w-[160px] bg-[#d5d9dc]" />
        <span className="ml-1 w-[158px] bg-[#e3e6e8]" />
        <span className="ml-1 w-[153px] bg-[#a4aeb4]" />
      </div>
      <SoftKeyboard />
      <ImeBar />
    </div>
  );
}
